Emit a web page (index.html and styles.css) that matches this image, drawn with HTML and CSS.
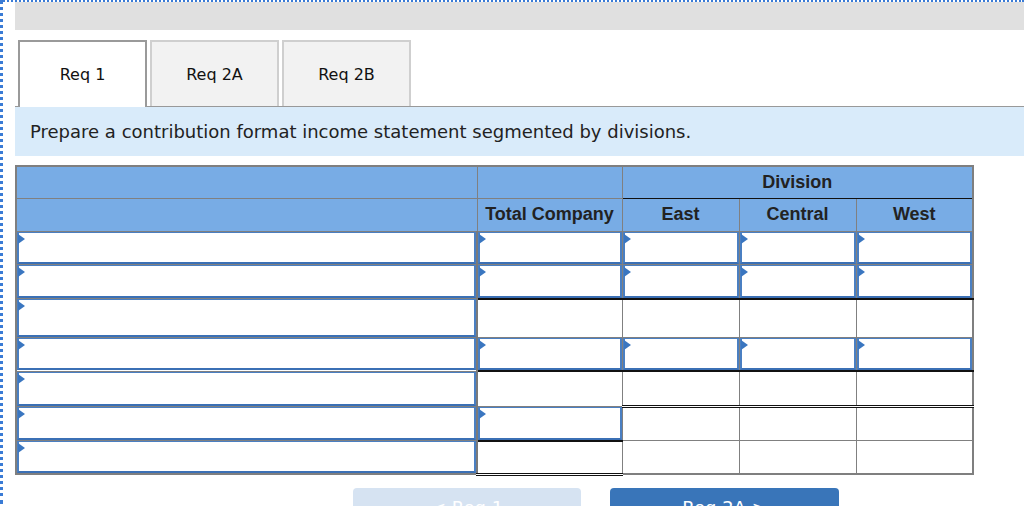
FILE: index.html
```html
<!DOCTYPE html>
<html lang="en">
<head>
<meta charset="utf-8">
<title>Req 1</title>
<link rel="stylesheet" href="styles.css">
</head>
<body>
<div class="frame">
  <div class="topbar"></div>
  <div class="tabs">
    <div class="tab active">Req 1</div>
    <div class="tab">Req 2A</div>
    <div class="tab">Req 2B</div>
  </div>
  <div class="instruction">Prepare a contribution format income statement segmented by divisions.</div>
  <table class="grid">
    <colgroup>
      <col class="c-label"><col class="c-total"><col class="c-div"><col class="c-div"><col class="c-div">
    </colgroup>
    <thead>
      <tr class="h1">
        <th></th><th></th><th colspan="3" class="division">Division</th>
      </tr>
      <tr class="h2">
        <th></th><th>Total Company</th><th>East</th><th>Central</th><th>West</th>
      </tr>
    </thead>
    <tbody>
      <tr class="row" style="--h:33px">
        <td><div class="inp"></div></td>
        <td><div class="inp"></div></td>
        <td><div class="inp"></div></td>
        <td><div class="inp"></div></td>
        <td><div class="inp"></div></td>
      </tr>
      <tr class="row" style="--h:34px">
        <td><div class="inp"></div></td>
        <td class="ul"><div class="inp"></div></td>
        <td class="ul"><div class="inp"></div></td>
        <td class="ul"><div class="inp"></div></td>
        <td class="ul"><div class="inp"></div></td>
      </tr>
      <tr class="row" style="--h:39px">
        <td><div class="inp"></div></td>
        <td></td><td></td><td></td><td></td>
      </tr>
      <tr class="row" style="--h:33px">
        <td><div class="inp"></div></td>
        <td class="ul"><div class="inp"></div></td>
        <td class="ul"><div class="inp"></div></td>
        <td class="ul"><div class="inp"></div></td>
        <td class="ul"><div class="inp"></div></td>
      </tr>
      <tr class="row" style="--h:35px">
        <td><div class="inp"></div></td>
        <td></td><td class="dul"></td><td class="dul"></td><td class="dul"></td>
      </tr>
      <tr class="row" style="--h:34px">
        <td><div class="inp"></div></td>
        <td class="ul"><div class="inp"></div></td>
        <td></td><td></td><td></td>
      </tr>
      <tr class="row" style="--h:33px">
        <td><div class="inp"></div></td>
        <td class="dul"></td><td></td><td></td><td></td>
      </tr>
    </tbody>
  </table>
  <div class="nav">
    <div class="btn prev">&lt; Req 1</div>
    <div class="btn next">Req 2A &gt;</div>
  </div>
</div>
</body>
</html>
```

FILE: styles.css
```css
html, body {
  margin: 0;
  padding: 0;
  background: #fff;
  overflow: hidden;
}
body {
  width: 1024px;
  height: 506px;
  font-family: "DejaVu Sans", Verdana, sans-serif;
  color: #222;
}
.frame {
  border-left: 3px dotted #3a7bd5;
  border-top: 2px dotted #3a7bd5;
  padding-left: 12px;
  height: 504px;
  box-sizing: border-box;
}
.topbar {
  height: 28px;
  background: #e0e0e0;
}
.tabs {
  display: flex;
  gap: 3px;
  margin-top: 10px;
  padding-left: 3px;
  position: relative;
  z-index: 2;
  margin-bottom: -1px;
}
.tab {
  width: 129px;
  height: 66px;
  box-sizing: border-box;
  border: 2px solid #cfcfcf;
  border-bottom: none;
  background: #f2f2f2;
  display: flex;
  align-items: center;
  justify-content: center;
  font-size: 16px;
  color: #111;
}
.tab.active {
  background: #fff;
  border-color: #9a9a9a;
  height: 67px;
}
.instruction {
  background: #d9ebfa;
  border-top: 1px solid #999;
  height: 50px;
  box-sizing: border-box;
  padding: 14px 0 0 15px;
  font-size: 18px;
  color: #222;
}
.grid {
  margin-top: 9px;
  border-collapse: collapse;
  table-layout: fixed;
  width: 957px;
  border: 2px solid #7f7f7f;
  font-family: "Liberation Sans", Arial, sans-serif;
}
.c-label { width: 461px; }
.c-total { width: 145px; }
.c-div { width: 117px; }
.grid th {
  background: #78ace5;
  border: 1px solid #808080;
  font-weight: bold;
  font-size: 18px;
  color: #222;
  padding: 0;
  text-align: center;
}
.h1 { height: 32px; }
.h2 { height: 33px; }
.h1 .division { border-bottom: 1px solid #111; }
.grid td {
  border: 1px solid #808080;
  padding: 0;
  height: var(--h);
  box-sizing: border-box;
  vertical-align: top;
}
.grid td:first-child {
  border-right: 2px solid #7a7a7a;
}
.row { height: var(--h); }
.inp {
  position: relative;
  box-sizing: border-box;
  height: calc(var(--h) - 1px);
  border: 2px solid #4a7fc2;
  border-top-width: 1px;
  border-bottom-color: #3b70b5;
  background: #fff;
}
.inp::before {
  content: "";
  position: absolute;
  left: -1px;
  top: 1px;
  border-left: 7px solid #3a76c0;
  border-top: 5px solid transparent;
  border-bottom: 5px solid transparent;
}
.grid td.ul {
  border-bottom: 2px solid #111;
}
.grid td.dul {
  border-bottom: 3px double #111;
}
.nav {
  display: flex;
  gap: 29px;
  margin-top: 12px;
  padding-left: 338px;
}
.btn {
  width: 229px;
  height: 44px;
  border-radius: 4px;
  display: flex;
  align-items: center;
  justify-content: center;
  font-family: "DejaVu Sans", Verdana, sans-serif;
  font-size: 18px;
  color: #fff;
  padding-bottom: 5px;
  box-sizing: border-box;
}
.btn.prev { background: #d6e3f2; width: 228px; }
.btn.next { background: #3975b9; }
```
